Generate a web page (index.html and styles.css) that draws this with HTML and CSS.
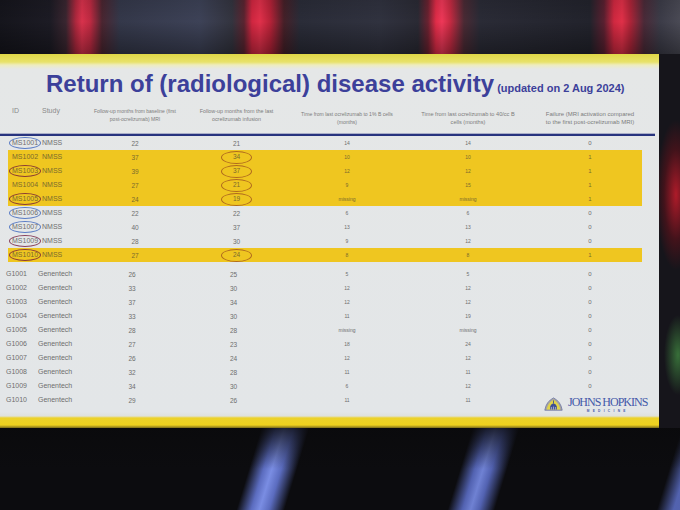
FILE: index.html
```html
<!DOCTYPE html>
<html lang="en">
<head>
<meta charset="utf-8">
<title>Return of (radiological) disease activity</title>
<link rel="stylesheet" href="styles.css">
</head>
<body>
<div class="stage-top"></div>
<div class="stage-mid">
  <section class="slide">
    <h1 class="title">Return of (radiological) disease activity<span class="upd"> (updated on 2 Aug 2024)</span></h1>

    <div class="row head">
      <span class="c-id hd">ID</span>
      <span class="c-st hd">Study</span>
      <span class="c-n hc h3">Follow-up months from baseline (first<br>post-ocrelizumab) MRI</span>
      <span class="c-n hc h4">Follow-up months from the last<br>ocrelizumab infusion</span>
      <span class="c-n hc low h5">Time from last ocrelizumab to 1% B cells<br>(months)</span>
      <span class="c-n hc low h6">Time from last ocrelizumab to 40/cc B<br>cells (months)</span>
      <span class="c-n c-f hc low h7">Failure (MRI activation compared<br>to the first post-ocrelizumab MRI)</span>
    </div>
    <div class="rule"></div>

    <div class="group">
      <div class="row"><span class="c-id"><span class="ring blue">MS1001</span></span><span class="c-st">NMSS</span><span class="c-n a">22</span><span class="c-n a">21</span><span class="c-n s">14</span><span class="c-n s">14</span><span class="c-n c-f">0</span></div>
      <div class="row hl"><span class="c-id">MS1002</span><span class="c-st">NMSS</span><span class="c-n a">37</span><span class="c-n a"><span class="oval">34</span></span><span class="c-n s">10</span><span class="c-n s">10</span><span class="c-n c-f">1</span></div>
      <div class="row hl"><span class="c-id"><span class="ring red">MS1003</span></span><span class="c-st">NMSS</span><span class="c-n a">39</span><span class="c-n a"><span class="oval">37</span></span><span class="c-n s">12</span><span class="c-n s">12</span><span class="c-n c-f">1</span></div>
      <div class="row hl"><span class="c-id">MS1004</span><span class="c-st">NMSS</span><span class="c-n a">27</span><span class="c-n a"><span class="oval">21</span></span><span class="c-n s">9</span><span class="c-n s">15</span><span class="c-n c-f">1</span></div>
      <div class="row hl"><span class="c-id"><span class="ring red">MS1005</span></span><span class="c-st">NMSS</span><span class="c-n a">24</span><span class="c-n a"><span class="oval">19</span></span><span class="c-n s">missing</span><span class="c-n s">missing</span><span class="c-n c-f">1</span></div>
      <div class="row"><span class="c-id"><span class="ring blue">MS1006</span></span><span class="c-st">NMSS</span><span class="c-n a">22</span><span class="c-n a">22</span><span class="c-n s">6</span><span class="c-n s">6</span><span class="c-n c-f">0</span></div>
      <div class="row"><span class="c-id"><span class="ring blue">MS1007</span></span><span class="c-st">NMSS</span><span class="c-n a">40</span><span class="c-n a">37</span><span class="c-n s">13</span><span class="c-n s">13</span><span class="c-n c-f">0</span></div>
      <div class="row"><span class="c-id"><span class="ring plum">MS1009</span></span><span class="c-st">NMSS</span><span class="c-n a">28</span><span class="c-n a">30</span><span class="c-n s">9</span><span class="c-n s">12</span><span class="c-n c-f">0</span></div>
      <div class="row hl"><span class="c-id"><span class="ring red">MS1010</span></span><span class="c-st">NMSS</span><span class="c-n a">27</span><span class="c-n a"><span class="oval">24</span></span><span class="c-n s">8</span><span class="c-n s">8</span><span class="c-n c-f">1</span></div>
    </div>

    <div class="group g">
      <div class="row"><span class="c-id">G1001</span><span class="c-st">Genentech</span><span class="c-n a">26</span><span class="c-n a">25</span><span class="c-n s">5</span><span class="c-n s">5</span><span class="c-n c-f">0</span></div>
      <div class="row"><span class="c-id">G1002</span><span class="c-st">Genentech</span><span class="c-n a">33</span><span class="c-n a">30</span><span class="c-n s">12</span><span class="c-n s">12</span><span class="c-n c-f">0</span></div>
      <div class="row"><span class="c-id">G1003</span><span class="c-st">Genentech</span><span class="c-n a">37</span><span class="c-n a">34</span><span class="c-n s">12</span><span class="c-n s">12</span><span class="c-n c-f">0</span></div>
      <div class="row"><span class="c-id">G1004</span><span class="c-st">Genentech</span><span class="c-n a">33</span><span class="c-n a">30</span><span class="c-n s">11</span><span class="c-n s">19</span><span class="c-n c-f">0</span></div>
      <div class="row"><span class="c-id">G1005</span><span class="c-st">Genentech</span><span class="c-n a">28</span><span class="c-n a">28</span><span class="c-n s">missing</span><span class="c-n s">missing</span><span class="c-n c-f">0</span></div>
      <div class="row"><span class="c-id">G1006</span><span class="c-st">Genentech</span><span class="c-n a">27</span><span class="c-n a">23</span><span class="c-n s">18</span><span class="c-n s">24</span><span class="c-n c-f">0</span></div>
      <div class="row"><span class="c-id">G1007</span><span class="c-st">Genentech</span><span class="c-n a">26</span><span class="c-n a">24</span><span class="c-n s">12</span><span class="c-n s">12</span><span class="c-n c-f">0</span></div>
      <div class="row"><span class="c-id">G1008</span><span class="c-st">Genentech</span><span class="c-n a">32</span><span class="c-n a">28</span><span class="c-n s">11</span><span class="c-n s">11</span><span class="c-n c-f">0</span></div>
      <div class="row"><span class="c-id">G1009</span><span class="c-st">Genentech</span><span class="c-n a">34</span><span class="c-n a">30</span><span class="c-n s">6</span><span class="c-n s">12</span><span class="c-n c-f">0</span></div>
      <div class="row"><span class="c-id">G1010</span><span class="c-st">Genentech</span><span class="c-n a">29</span><span class="c-n a">26</span><span class="c-n s">11</span><span class="c-n s">11</span>
        <span class="c-logo">
          <span class="logo">
            <svg class="shield" width="19" height="14" viewBox="0 0 19 14" aria-hidden="true">
              <path d="M0.8 13.2 Q2.2 4.5 9.5 0.9 Q16.8 4.5 18.2 13.2 Z" fill="#a9a6a0" stroke="#6a74a4" stroke-width="0.8"/>
              <path d="M2.6 12.6 Q4 6 9.5 2.8 Q15 6 16.4 12.6 Z" fill="#e2d54a"/>
              <path d="M6.2 12.6 L6.2 9.6 Q6.6 6.8 9.5 6.2 Q12.4 6.8 12.8 9.6 L12.8 12.6 Z" fill="#3f4f95"/>
              <path d="M9.5 3.4 L9.5 6.4" stroke="#3f4f95" stroke-width="0.9"/>
              <path d="M7.6 12.6 L7.6 10 M9.5 12.6 L9.5 9.6 M11.4 12.6 L11.4 10" stroke="#dfe3ef" stroke-width="0.6"/>
            </svg>
            <span class="jh">
              <span class="jh-name">JOHNS HOPKINS</span>
              <span class="jh-sub">MEDICINE</span>
            </span>
          </span>
        </span>
      </div>
    </div>
  </section>
</div>
<div class="stage-bottom"></div>
</body>
</html>
```
FILE: styles.css
```css
* { box-sizing: border-box; margin: 0; padding: 0; }

html, body { width: 680px; height: 510px; overflow: hidden; }

body {
  font-family: "Liberation Sans", Arial, sans-serif;
  background:
    radial-gradient(ellipse 20px 75px at 676px 195px, rgba(200, 28, 44, 0.85), rgba(120, 16, 26, 0.45) 60%, rgba(0, 0, 0, 0) 100%),
    radial-gradient(ellipse 14px 40px at 678px 355px, rgba(70, 150, 70, 0.7), rgba(0, 0, 0, 0) 100%),
    #16151b;
}

/* ---------- stage surroundings ---------- */
.stage-top {
  height: 54px;
  background:
    linear-gradient(to bottom, rgba(0, 0, 0, 0.1) 0, rgba(0, 0, 0, 0) 40%, rgba(0, 0, 0, 0.35) 100%),
    linear-gradient(90deg,
      #15151c 0, #1c1b24 50px, #3a2630 66px, #b0283e 76px, #d8324c 82px, #c02a42 90px,
      #4a2530 102px, #34384a 120px, #3d4257 200px, #33343f 232px, #5a2430 244px,
      #d02640 252px, #e0304a 260px, #b82238 270px, #452028 284px, #2a2c38 300px,
      #30323f 380px, #2a2a34 418px, #6a2230 428px, #e02c48 436px, #ee3858 442px,
      #c82a42 450px, #4a2a34 464px, #2a2b36 480px, #22232c 590px, #5a2030 604px,
      #d02840 614px, #e03048 622px, #b02438 630px, #4a2a38 644px, #3c3c48 660px, #4a4a55 680px);
}

.stage-mid { display: flex; height: 374px; }

.stage-bottom {
  height: 82px;
  background:
    linear-gradient(to bottom, rgba(10, 10, 12, 0.8) 0, rgba(10, 10, 12, 0) 50%),
    linear-gradient(107deg,
      rgba(0, 0, 0, 0) 250px, rgba(105, 125, 222, 0.85) 264px, rgba(128, 148, 238, 0.95) 272px,
      rgba(105, 125, 222, 0.85) 281px, rgba(0, 0, 0, 0) 296px,
      rgba(0, 0, 0, 0) 452px, rgba(100, 120, 218, 0.8) 466px, rgba(122, 142, 232, 0.9) 474px,
      rgba(100, 120, 218, 0.8) 482px, rgba(0, 0, 0, 0) 497px,
      rgba(0, 0, 0, 0) 652px, rgba(100, 120, 215, 0.8) 668px),
    #0c0c0f;
}

/* ---------- slide ---------- */
.slide {
  width: 659px;
  height: 374px;
  display: flex;
  flex-direction: column;
  background:
    linear-gradient(to bottom,
      #dfd746 0, #e8e26a 8px, #eeecbe 11px, #e5e7e7 15px,
      #e3e6e8 358px, #dfe1dc 362px, #ecd22a 364px, #efd11e 371px, #7c6c1c 374px);
}

.title {
  padding: 16px 0 0 46px;
  height: 44px;
  font-size: 24px;
  line-height: 28px;
  font-weight: bold;
  color: #3c409a;
  white-space: nowrap;
}
.upd { font-size: 11px; }

/* ---------- table rows ---------- */
.row {
  display: grid;
  grid-template-columns: 34px 43px 100px 103px 118px 124px 112px;
  grid-template-rows: 14px;
  width: 634px;
  margin-left: 8px;
  height: 14px;
  align-items: center;
  color: #6e6e6e;
}

.row.head {
  grid-template-rows: 27px;
  height: 36px;
  align-items: start;
  padding-top: 9px;
  color: #7c7c7c;
}

.hd { font-size: 6.5px; line-height: 8px; color: #8a8a8a; }
.hc { text-align: center; line-height: 8px; font-size: 5.4px; }
.hc.low { margin-top: 3px; }
.h3 { font-size: 5px; }
.h5 { font-size: 5.1px; }
.h6 { font-size: 5.6px; }
.h7 { font-size: 5.9px; }

.rule {
  height: 2px;
  margin-right: 4px;
  background: #27337e;
  box-shadow: 0 -1px 0 rgba(60, 70, 140, 0.35);
}

.row.hl { background: #efc620; color: #7a6a2e; }

.group.g { margin-top: 5px; }

.c-id { font-size: 7px; line-height: 8px; padding-left: 4px; white-space: nowrap; }
.c-st { font-size: 7px; line-height: 8px; white-space: nowrap; }
.c-n { text-align: center; white-space: nowrap; }
.c-n.a { font-size: 6.5px; }
.c-n.s { font-size: 5px; }
.c-f { font-size: 6px; padding-left: 8px; }

.g .c-id { padding-left: 0; margin-left: -2px; }
.g .c-st { margin-left: -4px; }
.g .c-n.a { padding-right: 6px; }

/* hand-drawn circles on the slide */
.ring {
  display: inline-block;
  margin-left: -3px;
  padding: 1px 2px;
  border: 1px solid #5a7cc4;
  border-radius: 50%;
}
.ring.red { border-color: #8a3b34; }
.ring.plum { border-color: #87405c; }
.ring.blue { border-color: #5a7cc4; }

.oval {
  display: inline-block;
  padding: 1.5px 11px;
  line-height: 8px;
  border: 1px solid #b06a1e;
  border-radius: 50%;
}

/* ---------- Johns Hopkins logo ---------- */
.c-logo {
  display: flex;
  align-self: start;
  height: 14px;
  padding: 4px 0 0 14px;
  overflow: visible;
}
.logo { display: flex; align-items: flex-start; gap: 5px; height: 18px; }
.shield { display: block; margin-top: 0; flex: none; }
.jh { display: flex; flex-direction: column; align-items: center; }
.jh-name {
  font-family: "Liberation Serif", "Times New Roman", serif;
  font-size: 12px;
  line-height: 11px;
  letter-spacing: -1px;
  color: #4358a8;
  white-space: nowrap;
}
.jh-sub {
  font-size: 3.2px;
  line-height: 4px;
  letter-spacing: 3.3px;
  color: #4358a8;
  font-weight: bold;
  margin-top: 1px;
}
```
